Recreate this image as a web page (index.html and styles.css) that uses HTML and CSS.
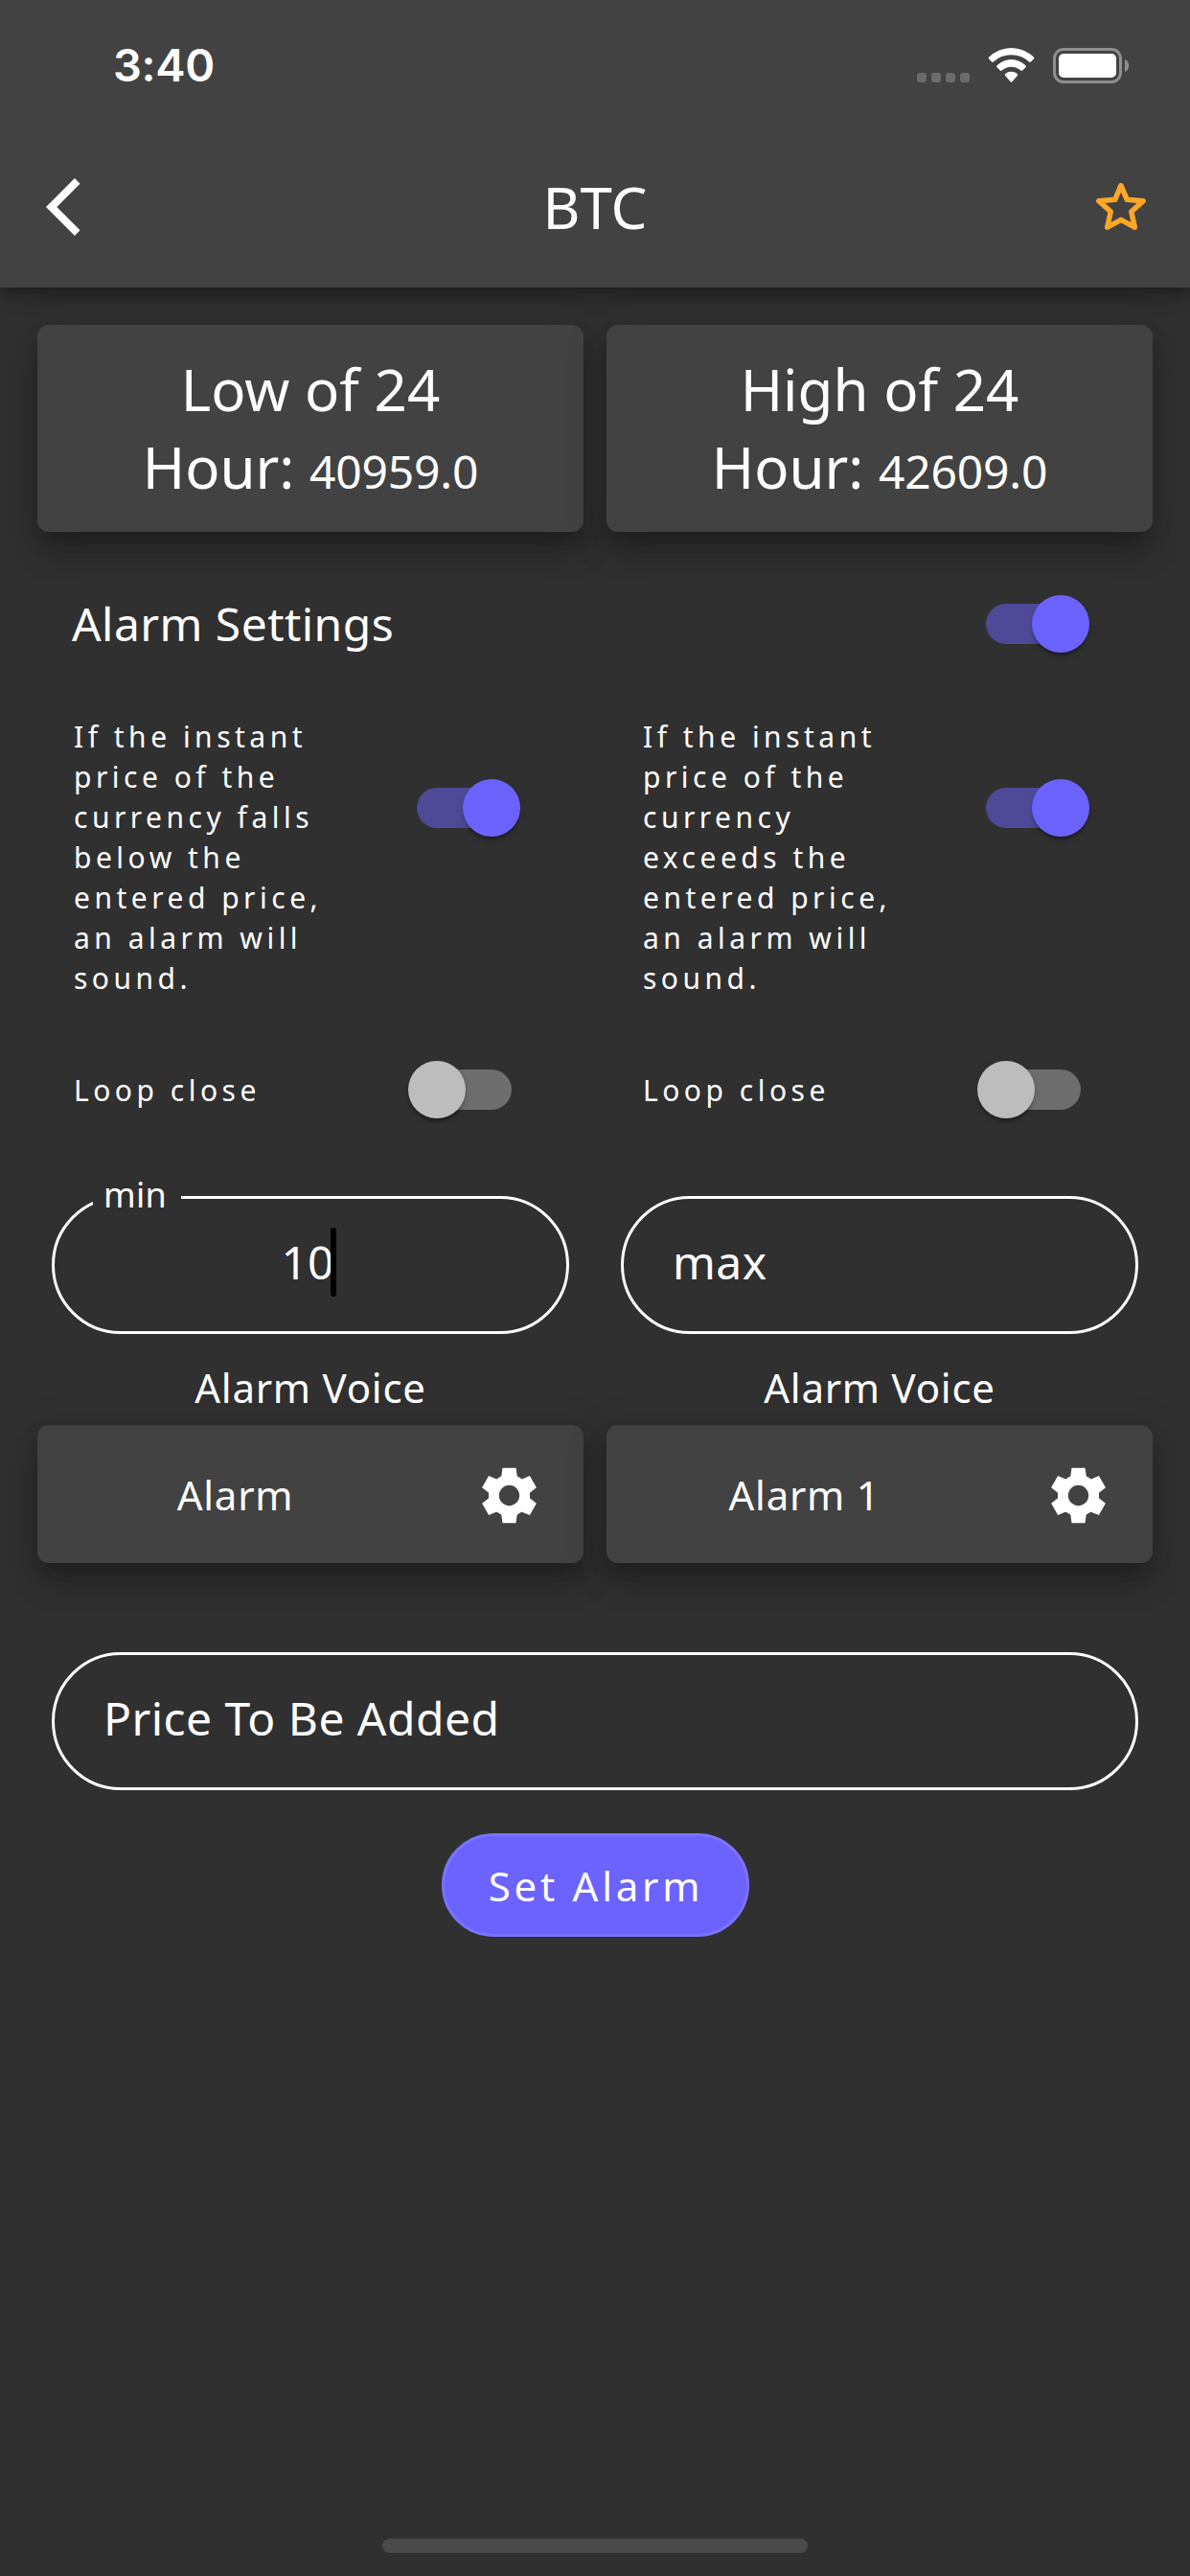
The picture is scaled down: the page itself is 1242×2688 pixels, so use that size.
FILE: index.html
```html
<!DOCTYPE html>
<html lang="en">
<head>
<meta charset="utf-8">
<title>BTC</title>
<link rel="stylesheet" href="styles.css">
</head>
<body>
<header class="header">
  <div class="status">
    <span class="time">3:40</span>
    <svg class="status-icons" width="224" height="40" viewBox="956 47 224 40">
      <g fill="#6b6b6b">
        <rect x="957" y="75" width="10" height="10" rx="3"/>
        <rect x="972" y="75" width="10" height="10" rx="3"/>
        <rect x="987" y="75" width="10" height="10" rx="3"/>
        <rect x="1002" y="75" width="10" height="10" rx="3"/>
      </g>
      <g fill="#fff">
        <path d="M1032.2 58.6a33 33 0 0 1 46.600 0q1 1 .1 2l-3 3q-.9.8-1.800 0a27 27 0 0 0-37.200 0q-.9.8-1.800 0l-3-3q-.8-1 .1-2z"/>
        <path d="M1040.500 67.200a21.500 21.500 0 0 1 30 0q.9 1 0 2l-3.300 3.300q-.9.800-1.900 0a14.500 14.500 0 0 0-19.600 0q-1 .8-1.900 0l-3.300-3.300q-.9-1 0-2z"/>
        <path d="M1049.200 76.100a9.800 9.800 0 0 1 12.600 0q.9.900 0 1.900l-5.400 6.300q-.9.900-1.800 0l-5.400-6.300q-.9-1 0-1.900z"/>
      </g>
      <rect x="1100.500" y="50.500" width="69" height="34" rx="9.500" fill="none" stroke="#8f8f8f" stroke-width="3"/>
      <rect x="1105" y="55" width="60" height="25" rx="5" fill="#fff"/>
      <path d="M1174 61c5.500 2 5.500 11 0 13z" fill="#8f8f8f"/>
    </svg>
  </div>
  <div class="appbar">
    <svg class="back" width="36" height="60" viewBox="0 0 36 60"><path d="M30 0 35.500 5.700 11.300 30 35.500 54.300 30 60 0 30z" fill="#fff"/></svg>
    <h1 class="title">BTC</h1>
    <svg class="star" width="54" height="52" viewBox="1143 189 54 52"><path d="M1170 193.700 1176.300 208.300 1193.200 209.800 1180.800 220.800 1184.300 237.200 1170 229.300 1155.700 237.200 1159.200 220.800 1146.800 209.800 1163.700 208.300z" fill="none" stroke="#ffa726" stroke-width="5.500" stroke-linejoin="round"/></svg>
  </div>
</header>
<main class="main">
  <div class="columns">
    <section class="card quote">Low of 24<br>Hour: <span class="price">40959.0</span></section>
    <section class="card quote">High of 24<br>Hour: <span class="price">42609.0</span></section>
  </div>
  <div class="settings">
    <h2 class="settings-title">Alarm Settings</h2>
    <span class="switch on"></span>
  </div>
  <div class="columns alarms">
    <section class="alarm">
      <div class="rule"><p class="note">If the instant price of the currency falls below the entered price, an alarm will sound.</p><span class="switch on"></span></div>
      <div class="loop"><span class="note">Loop close</span><span class="switch"></span></div>
      <div class="field focused"><span class="label">min</span><span>10</span><span class="caret"></span></div>
      <div class="voice-title">Alarm Voice</div>
      <div class="card voice"><span>Alarm</span>
        <svg class="gear" width="69" height="69" viewBox="0 0 24 24"><path fill="#fff" fill-rule="evenodd" d="M19.440 12.990l-.01.02c.04-.33.08-.67.08-1.010 0-.34-.03-.66-.07-.99l.01.02 2.440-1.920-2.430-4.220-2.870 1.160.01.01c-.52-.4-1.090-.74-1.710-1h.01L14.440 2H9.570l-.44 3.070h.01c-.62.26-1.190.6-1.710 1l.01-.01-2.880-1.170-2.440 4.220 2.440 1.920.01-.02c-.04.33-.07.65-.07.99 0 .34.03.68.08 1.010l-.01-.02-2.430 1.910 2.430 4.200 2.880-1.150-.02-.04c.53.41 1.100.75 1.730 1.010h-.03L9.580 22h4.850l.44-3.070h-.01c.62-.26 1.200-.6 1.730-1.010l-.02.04 2.880 1.150 2.430-4.200-2.440-1.920zM12 15.700a3.700 3.700 0 1 1 0-7.400 3.700 3.700 0 0 1 0 7.400z"/></svg>
      </div>
    </section>
    <section class="alarm">
      <div class="rule"><p class="note">If the instant price of the currency exceeds the entered price, an alarm will sound.</p><span class="switch on"></span></div>
      <div class="loop"><span class="note">Loop close</span><span class="switch"></span></div>
      <div class="field"><span>max</span></div>
      <div class="voice-title">Alarm Voice</div>
      <div class="card voice"><span>Alarm 1</span>
        <svg class="gear" width="69" height="69" viewBox="0 0 24 24"><path fill="#fff" fill-rule="evenodd" d="M19.440 12.990l-.01.02c.04-.33.08-.67.08-1.010 0-.34-.03-.66-.07-.99l.01.02 2.440-1.920-2.430-4.220-2.870 1.160.01.01c-.52-.4-1.090-.74-1.710-1h.01L14.440 2H9.570l-.44 3.070h.01c-.62.26-1.190.6-1.710 1l.01-.01-2.880-1.170-2.440 4.220 2.440 1.920.01-.02c-.04.33-.07.65-.07.99 0 .34.03.68.08 1.010l-.01-.02-2.430 1.910 2.430 4.200 2.880-1.150-.02-.04c.53.41 1.100.75 1.730 1.010h-.03L9.580 22h4.850l.44-3.070h-.01c.62-.26 1.200-.6 1.730-1.010l-.02.04 2.880 1.150 2.430-4.200-2.440-1.920zM12 15.700a3.700 3.700 0 1 1 0-7.400 3.700 3.700 0 0 1 0 7.400z"/></svg>
      </div>
    </section>
  </div>
  <div class="field added"><span>Price To Be Added</span></div>
  <button class="submit" type="button">Set Alarm</button>
</main>
<footer class="footer"><span class="home-bar"></span></footer>
</body>
</html>
```
FILE: styles.css
```css
* { box-sizing: border-box; }

body {
  margin: 0;
  width: 1242px;
  height: 2688px;
  display: flex;
  flex-direction: column;
  overflow: hidden;
  background: #303030;
  color: #fff;
  font-family: "Noto Sans", sans-serif;
}

svg { display: block; flex: none; }

/* Header */
.header {
  height: 300px;
  flex: none;
  background: #424242;
  box-shadow: 0 6px 12px -3px rgba(0, 0, 0, .2), 0 12px 15px rgba(0, 0, 0, .14), 0 3px 30px rgba(0, 0, 0, .12);
}
.status {
  height: 132px;
  padding: 4px 62px 0 118px;
  display: flex;
  align-items: center;
  justify-content: space-between;
}
.time {
  font: 600 47px/60px Inter, sans-serif;
  letter-spacing: -.3px;
}
.appbar {
  height: 168px;
  padding: 0 45px 0 48px;
  display: grid;
  grid-template-columns: 90px 1fr 93px;
  align-items: center;
}
.star { justify-self: end; margin-top: -2px; }
.title {
  margin: 0;
  text-align: center;
  font-weight: 400;
  font-size: 60px;
  line-height: 82px;
}

/* Content */
.main { padding: 39px 39px 0; flex: 1; }
.columns {
  display: grid;
  grid-template-columns: 1fr 1fr;
  gap: 24px;
}
.card {
  border-radius: 12px;
  background: #424242;
  box-shadow: 0 15px 15px -9px rgba(0, 0, 0, .2), 0 24px 30px 3px rgba(0, 0, 0, .14), 0 9px 42px 6px rgba(0, 0, 0, .12);
}
.quote {
  height: 216px;
  padding: 27px 0;
  text-align: center;
  font-size: 60px;
  line-height: 81px;
}
.price { font-size: 48px; line-height: 1; letter-spacing: -.2px; }

.settings {
  height: 144px;
  margin-top: 24px;
  padding: 0 66px 0 36px;
  display: flex;
  align-items: center;
  justify-content: space-between;
}
.settings-title {
  margin: 0;
  padding-bottom: 2px;
  font-weight: 400;
  font-size: 48px;
  letter-spacing: .45px;
}

.switch {
  width: 117px;
  height: 60px;
  padding: 9px;
  flex: none;
  position: relative;
}
.switch::before {
  content: "";
  display: block;
  height: 42px;
  border-radius: 21px;
  background: #6e6e6e;
}
.switch::after {
  content: "";
  position: absolute;
  top: 0;
  left: 0;
  width: 60px;
  height: 60px;
  border-radius: 50%;
  background: #bdbdbd;
  box-shadow: 0 6px 3px -3px rgba(0, 0, 0, .2), 0 3px 3px rgba(0, 0, 0, .14), 0 3px 9px rgba(0, 0, 0, .12);
}
.switch.on::before { background: #4e4a98; }
.switch.on::after { left: 57px; background: #6c63ff; }

.alarms { margin-top: 25px; }
.rule, .loop {
  padding: 0 66px 0 38px;
  display: flex;
  justify-content: space-between;
}
.rule { height: 294px; align-items: flex-start; }
.rule .switch { margin-top: 65px; }
.loop { height: 60px; margin-top: 65px; align-items: center; }
.loop .note { padding-top: 2px; }
.note {
  margin: 0;
  max-width: 280px;
  font-size: 30px;
  line-height: 42px;
  letter-spacing: 4.5px;
}

.field {
  position: relative;
  height: 144px;
  margin: 81px 15px 0;
  padding: 0 51px 7px;
  display: flex;
  align-items: center;
  border: 3px solid #fff;
  border-radius: 72px;
  font-size: 48px;
  letter-spacing: .45px;
}
.focused { justify-content: center; letter-spacing: 0; }
.label {
  position: absolute;
  left: 40px;
  top: -29px;
  width: 92px;
  padding-left: 11px;
  background: #303030;
  font-size: 36px;
  line-height: 50px;
  letter-spacing: .3px;
}
.caret {
  width: 6px;
  height: 72px;
  margin: 0 3px 0 -3px;
  border-radius: 3px;
  background: #000;
}
.voice-title {
  margin-top: 27px;
  text-align: center;
  font-size: 42px;
  line-height: 57px;
  letter-spacing: .75px;
}
.voice {
  height: 144px;
  margin-top: 11px;
  display: grid;
  grid-template-columns: 413px 157px;
  align-items: center;
  text-align: center;
  font-size: 42px;
  letter-spacing: .75px;
}
.gear { margin-left: 45px; margin-top: 2px; }

.added { margin-top: 93px; padding-bottom: 8px; }
.submit {
  display: block;
  width: 321px;
  height: 108px;
  margin: 45px auto 0;
  padding: 0 0 0 2px;
  border: 3px solid #7b73ff;
  border-radius: 54px;
  background: #6c63ff;
  color: #fff;
  font: 400 42px/57px "Noto Sans", sans-serif;
  letter-spacing: 3.75px;
}

.footer {
  height: 39px;
  flex: none;
  display: flex;
  justify-content: center;
}
.home-bar {
  width: 444px;
  height: 15px;
  border-radius: 8px;
  background: #4a4a4a;
}
```
